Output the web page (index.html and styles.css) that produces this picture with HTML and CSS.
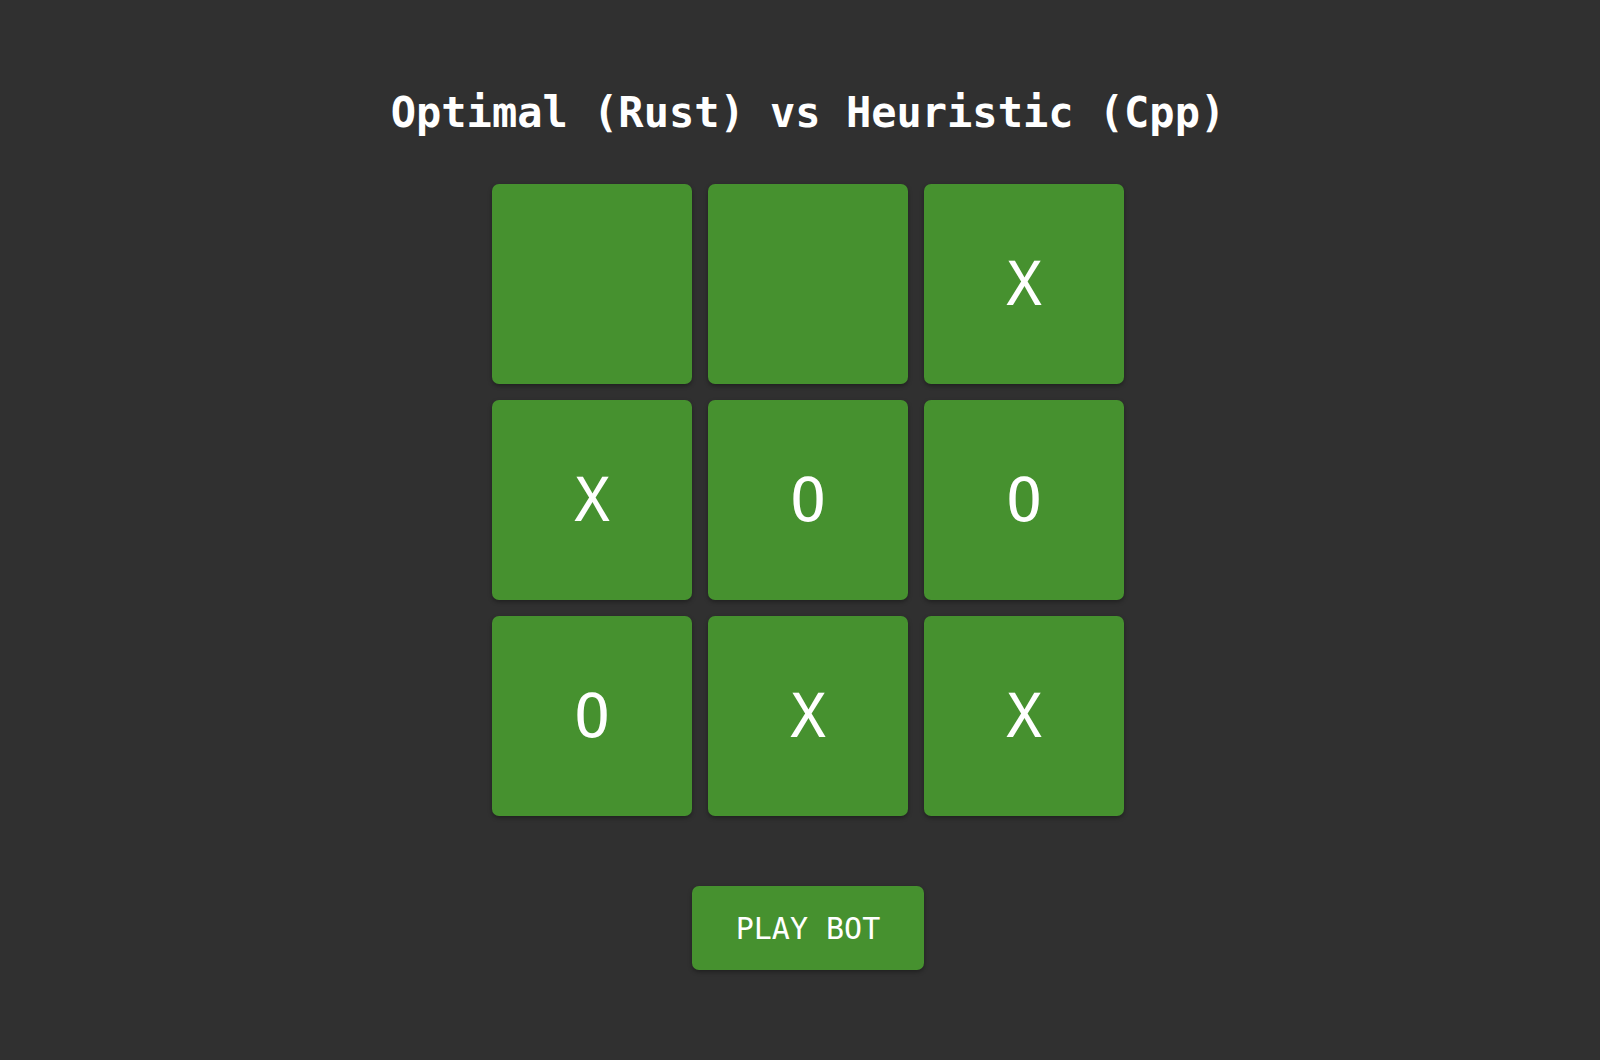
FILE: index.html
```html
<!DOCTYPE html>
<html>
<head>
<meta charset="utf-8">
<link rel="stylesheet" href="styles.css">
</head>
<body>
<main class="app">
  <h1 class="title">Optimal (Rust) vs Heuristic (Cpp)</h1>
  <div class="board">
    <div class="cell"></div>
    <div class="cell"></div>
    <div class="cell">X</div>
    <div class="cell">X</div>
    <div class="cell">O</div>
    <div class="cell">O</div>
    <div class="cell">O</div>
    <div class="cell">X</div>
    <div class="cell">X</div>
  </div>
  <button class="play">PLAY BOT</button>
</main>
</body>
</html>
```
FILE: styles.css
```css
html, body {
  margin: 0;
  padding: 0;
  background: #303030;
}
body {
  font-family: "DejaVu Sans Mono", "Liberation Mono", monospace;
  color: #ffffff;
}
.app {
  min-height: 1060px;
  box-sizing: border-box;
  padding: 0 0 0 16px;
  display: flex;
  flex-direction: column;
  align-items: center;
}
.title {
  margin: 88px 0 0;
  font-size: 42px;
  font-weight: bold;
  line-height: 50px;
}
.board {
  margin-top: 46px;
  display: grid;
  grid-template-columns: repeat(3, 200px);
  grid-auto-rows: 200px;
  gap: 16px;
}
.cell {
  background: #46912f;
  border-radius: 7px;
  box-shadow: 0 2px 4px rgba(0, 0, 0, 0.35);
  display: flex;
  align-items: center;
  justify-content: center;
  font-size: 60px;
  color: #ffffff;
}
.play {
  margin-top: 70px;
  width: 232px;
  height: 84px;
  border: none;
  border-radius: 7px;
  background: #46912f;
  color: #ffffff;
  font-family: "DejaVu Sans Mono", "Liberation Mono", monospace;
  font-size: 30px;
  box-shadow: 0 2px 4px rgba(0, 0, 0, 0.35);
  padding: 0;
}
```
